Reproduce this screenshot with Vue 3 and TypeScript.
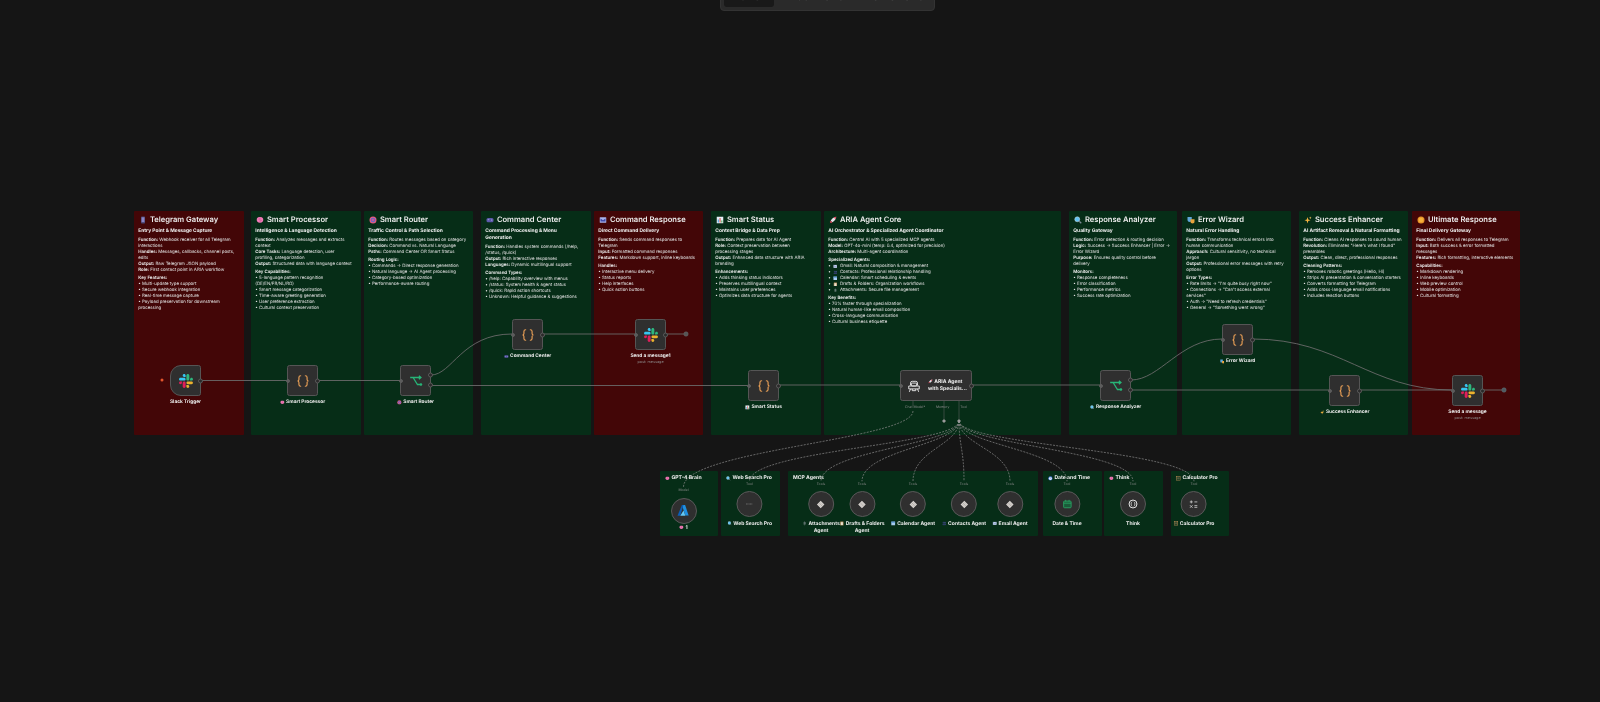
<script setup lang="ts">
type Line = string | [string, string];
interface Note {
  x: number; y: number; w: number; h: number;
  tone: 'red' | 'green' | 'mini';
  icon: string; title: string; sub?: string;
  blocks?: Line[][];
}
interface FlowNode {
  x: number; y: number; w?: number;
  icon: string; label: string; emoji?: string; sub?: string;
  trigger?: boolean; agent?: boolean;
  outs?: number[]; noIn?: boolean;
}
interface ToolNode {
  cx: number; cy: number; icon: string; port: string;
  label: string[]; emoji?: string; low?: boolean;
}

const notes: Note[] = [
  { x: 134, y: 211, w: 110, h: 224, tone: 'red', icon: 'phone', title: 'Telegram Gateway', sub: 'Entry Point & Message Capture', blocks: [
    ['Function: Webhook receiver for all Telegram interactions', 'Handles: Messages, callbacks, channel posts, edits', 'Output: Raw Telegram JSON payload', 'Role: First contact point in ARIA workflow'],
    ['Key Features:', '• Multi-update type support', '• Secure webhook integration', '• Real-time message capture', '• Payload preservation for downstream processing'],
  ] },
  { x: 251, y: 211, w: 110, h: 224, tone: 'green', icon: 'brain', title: 'Smart Processor', sub: 'Intelligence & Language Detection', blocks: [
    ['Function: Analyzes messages and extracts context', 'Core Tasks: Language detection, user\nprofiling, categorization', 'Output: Structured data with language context'],
    ['Key Capabilities:', '• 5-language pattern recognition (DE/EN/FR/NL/RO)', '• Smart message categorization', '• Time-aware greeting generation', '• User preference extraction', '• Cultural context preservation'],
  ] },
  { x: 364, y: 211, w: 109, h: 224, tone: 'green', icon: 'target', title: 'Smart Router', sub: 'Traffic Control & Path Selection', blocks: [
    ['Function: Routes messages based on category', 'Decision: Command vs. Natural Language', 'Paths: Command Center OR Smart Status'],
    ['Routing Logic:', '• Commands → Direct response generation', '• Natural language → AI Agent processing', '• Category-based optimization', '• Performance-aware routing'],
  ] },
  { x: 481, y: 211, w: 110, h: 224, tone: 'green', icon: 'game', title: 'Command Center', sub: 'Command Processing & Menu\nGeneration', blocks: [
    ['Function: Handles system commands (/help, /status, /quick)', 'Output: Rich interactive responses', 'Languages: Dynamic multilingual support'],
    ['Command Types:', '• /help: Capability overview with menus', '• /status: System health & agent status', '• /quick: Rapid action shortcuts', '• Unknown: Helpful guidance & suggestions'],
  ] },
  { x: 594, y: 211, w: 109, h: 224, tone: 'red', icon: 'mail', title: 'Command Response', sub: 'Direct Command Delivery', blocks: [
    ['Function: Sends command responses to Telegram', 'Input: Formatted command responses', 'Features: Markdown support, inline keyboards'],
    ['Handles:', '• Interactive menu delivery', '• Status reports', '• Help interfaces', '• Quick action buttons'],
  ] },
  { x: 711, y: 211, w: 110, h: 224, tone: 'green', icon: 'chart', title: 'Smart Status', sub: 'Context Bridge & Data Prep', blocks: [
    ['Function: Prepares data for AI Agent', 'Role: Context preservation between\nprocessing stages', 'Output: Enhanced data structure with ARIA branding'],
    ['Enhancements:', '• Adds thinking status indicators', '• Preserves multilingual context', '• Maintains user preferences', '• Optimizes data structure for agents'],
  ] },
  { x: 824, y: 211, w: 237, h: 224, tone: 'green', icon: 'rocket', title: 'ARIA Agent Core', sub: 'AI Orchestrator & Specialized Agent Coordinator', blocks: [
    ['Function: Central AI with 5 specialized MCP agents', 'Model: GPT-4o-mini (temp: 0.4, optimized for precision)', 'Architecture: Multi-agent coordination'],
    ['Specialized Agents:', ['envelope', 'Gmail: Natural composition & management'], ['people', 'Contacts: Professional relationship handling'], ['cal', 'Calendar: Smart scheduling & events'], ['clipboard', 'Drafts & Folders: Organization workflows'], ['clip', 'Attachments: Secure file management']],
    ['Key Benefits:', '• 70% faster through specialization', '• Natural human-like email composition', '• Cross-language communication', '• Cultural business etiquette'],
  ] },
  { x: 1069, y: 211, w: 108, h: 224, tone: 'green', icon: 'search', title: 'Response Analyzer', sub: 'Quality Gateway', blocks: [
    ['Function: Error detection & routing decision', 'Logic: Success → Success Enhancer | Error →\nError Wizard', 'Purpose: Ensures quality control before\ndelivery'],
    ['Monitors:', '• Response completeness', '• Error classification', '• Performance metrics', '• Success rate optimization'],
  ] },
  { x: 1182, y: 211, w: 109, h: 224, tone: 'green', icon: 'masks', title: 'Error Wizard', sub: 'Natural Error Handling', blocks: [
    ['Function: Transforms technical errors into human communication', 'Approach: Cultural sensitivity, no technical jargon', 'Output: Professional error messages with retry options'],
    ['Error Types:', '• Rate limits → "I\'m quite busy right now"', '• Connections → "Can\'t access external services"', '• Auth → "Need to refresh credentials"', '• General → "Something went wrong"'],
  ] },
  { x: 1299, y: 211, w: 109, h: 224, tone: 'green', icon: 'sparkle', title: 'Success Enhancer', sub: 'AI Artifact Removal & Natural Formatting', blocks: [
    ['Function: Cleans AI responses to sound human', 'Revolution: Eliminates "Here\'s what I found"\npreambles', 'Output: Clean, direct, professional responses'],
    ['Cleaning Patterns:', '• Removes robotic greetings (Hello, Hi)', '• Strips AI presentation & conversation starters', '• Converts formatting for Telegram', '• Adds cross-language email notifications', '• Includes reaction buttons'],
  ] },
  { x: 1412, y: 211, w: 108, h: 224, tone: 'red', icon: 'star', title: 'Ultimate Response', sub: 'Final Delivery Gateway', blocks: [
    ['Function: Delivers all responses to Telegram', 'Input: Both success & error formatted\nmessages', 'Features: Rich formatting, interactive elements'],
    ['Capabilities:', '• Markdown rendering', '• Inline keyboards', '• Web preview control', '• Mobile optimization', '• Cultural formatting'],
  ] },
  { x: 660, y: 471, w: 58, h: 65, tone: 'mini', icon: 'brain', title: 'GPT-4 Brain' },
  { x: 721, y: 471, w: 59, h: 65, tone: 'mini', icon: 'search', title: 'Web Search Pro' },
  { x: 788, y: 471, w: 250, h: 65, tone: 'mini', icon: '', title: 'MCP Agents' },
  { x: 1043, y: 471, w: 59, h: 65, tone: 'mini', icon: 'clock', title: 'Date and Time' },
  { x: 1104, y: 471, w: 59, h: 65, tone: 'mini', icon: 'brain', title: 'Think' },
  { x: 1171, y: 471, w: 58, h: 65, tone: 'mini', icon: 'abacus', title: 'Calculator Pro' },
];

const flowNodes: FlowNode[] = [
  { x: 170, y: 365, icon: 'slack', label: 'Slack Trigger', trigger: true, noIn: true, outs: [50] },
  { x: 287, y: 365, icon: 'code', label: 'Smart Processor', emoji: 'brain', outs: [50] },
  { x: 400, y: 365, icon: 'switch', label: 'Smart Router', emoji: 'target', outs: [32, 66] },
  { x: 512, y: 319, icon: 'code', label: 'Command Center', emoji: 'game', outs: [50] },
  { x: 635, y: 319, icon: 'slack', label: 'Send a message1', sub: 'post: message', outs: [50] },
  { x: 748, y: 370, icon: 'code', label: 'Smart Status', emoji: 'chart', outs: [50] },
  { x: 900, y: 370, w: 72, icon: 'robot', label: 'ARIA Agent with Specialis...', agent: true, outs: [50] },
  { x: 1100, y: 370, icon: 'switch', label: 'Response Analyzer', emoji: 'search', outs: [32, 66] },
  { x: 1222, y: 324, icon: 'code', label: 'Error Wizard', emoji: 'masks', outs: [50] },
  { x: 1329, y: 375, icon: 'code', label: 'Success Enhancer', emoji: 'sparkle', outs: [50] },
  { x: 1452, y: 375, icon: 'slack', label: 'Send a message', sub: 'post: message', outs: [50] },
];

const tools: ToolNode[] = [
  { cx: 683.5, cy: 510.7, icon: 'azure', port: 'Model', label: ['1'], emoji: 'brain', low: true },
  { cx: 749.5, cy: 504.3, icon: 'dash', port: 'Tool', label: ['Web Search Pro'], emoji: 'search' },
  { cx: 821, cy: 504.3, icon: 'mcp', port: 'Tools', label: ['Attachments', 'Agent'], emoji: 'clip' },
  { cx: 862, cy: 504.3, icon: 'mcp', port: 'Tools', label: ['Drafts & Folders', 'Agent'], emoji: 'clipboard' },
  { cx: 913, cy: 504.3, icon: 'mcp', port: 'Tools', label: ['Calendar Agent'], emoji: 'cal' },
  { cx: 964, cy: 504.3, icon: 'mcp', port: 'Tools', label: ['Contacts Agent'], emoji: 'people' },
  { cx: 1010, cy: 504.3, icon: 'mcp', port: 'Tools', label: ['Email Agent'], emoji: 'envelope' },
  { cx: 1067, cy: 504.3, icon: 'calendar', port: 'Tool', label: ['Date & Time'] },
  { cx: 1133, cy: 504.3, icon: 'think', port: 'Tool', label: ['Think'] },
  { cx: 1194, cy: 504.3, icon: 'calc', port: 'Tool', label: ['Calculator Pro'], emoji: 'abacus' },
];

const wires: string[] = [
  'M201 380.5H287',
  'M318 380.5H400',
  'M431 375C452 375 462 334 512 334',
  'M431 385.5H748',
  'M543 334H635',
  'M666 334H684',
  'M779 385H900',
  'M972 385H1100',
  'M1131 380C1160 380 1180 339 1222 339',
  'M1131 390H1329',
  'M1253 339C1340 339 1370 390 1452 390',
  'M1360 390H1452',
  'M1483 390H1502',
];

// dashed links from the agent's model and tool ports down to its sub nodes
const dashed: string[] = [
  'M913 411C913 440 683 450 683.5 ' + 487,
  ...tools.slice(1).map((t) => `M959 421C959 445 ${t.cx} 450 ${t.cx} ${t.cy - 23}`),
];

function split(line: string) {
  if (line.startsWith('•')) return { key: '', rest: line };
  const i = line.indexOf(':');
  return { key: line.slice(0, i + 1), rest: line.slice(i + 1) };
}
</script>

<template>
  <div class="canvas">
    <svg class="sprite" aria-hidden="true">
      <symbol id="e-phone" viewBox="0 0 16 16"><rect x="4" y="1" width="8" height="14" rx="1.5" fill="#4b4675" /><rect x="5.2" y="2.6" width="5.6" height="9.6" fill="#8b84c4" /></symbol>
      <symbol id="e-brain" viewBox="0 0 16 16"><path d="M8 2.500C5 1.500 1.500 3.500 1.500 7c-.6 3.500 2 6.500 6.500 6.500s7-3 6.500-6.500C14.500 3.500 11 1.500 8 2.500z" fill="#f27cb8" /><path d="M8 3v10M4.500 6c1 .8 2 .8 3 0M8.500 9c1 .8 2 .8 3 0" stroke="#c44c8c" stroke-width="1" fill="none" /></symbol>
      <symbol id="e-target" viewBox="0 0 16 16"><circle cx="8" cy="8" r="7" fill="#e35a80" /><circle cx="8" cy="8" r="4.600" fill="#6f64c8" /><circle cx="8" cy="8" r="2.200" fill="#e35a80" /></symbol>
      <symbol id="e-game" viewBox="0 0 16 16"><rect x="1" y="4" width="14" height="8.500" rx="3" fill="#5a58a8" /><rect x="3.500" y="7" width="3" height="1.200" fill="#c8c8f0" /><circle cx="11.500" cy="8" r="1.100" fill="#c8c8f0" /></symbol>
      <symbol id="e-mail" viewBox="0 0 16 16"><rect x="1.500" y="2.500" width="13" height="11" rx="1" fill="#a9b2ea" /><path d="M3 5l5 3.500L13 5v6H3z" fill="#3f4aa8" /></symbol>
      <symbol id="e-chart" viewBox="0 0 16 16"><rect x="1.500" y="1.500" width="13" height="13" fill="#e6edf5" /><rect x="3.500" y="7" width="2.200" height="6" fill="#4aa3df" /><rect x="7" y="4" width="2.200" height="9" fill="#d9534f" /><rect x="10.500" y="9" width="2.200" height="4" fill="#4caf50" /></symbol>
      <symbol id="e-rocket" viewBox="0 0 16 16"><path d="M14.500 1.500C9.500 2 5.500 5 3.500 9.500l3 3C11 10.500 14 6.500 14.500 1.500z" fill="#e8e4ea" /><path d="M14.500 1.500c-2 .2-3.500.8-5 1.600l3.400 3.400c.8-1.500 1.400-3 1.600-5z" fill="#e0455c" /><path d="M3.500 9.500l-2 1.500 1.500.5-1.500 3 3-1.500.5 1.500 1.500-2z" fill="#e0455c" /></symbol>
      <symbol id="e-search" viewBox="0 0 16 16"><circle cx="6.500" cy="6.500" r="5" fill="#62c4f4" stroke="#cfd8de" stroke-width="1" /><path d="M10.500 10.500l4 4" stroke="#7d8a96" stroke-width="2.500" /></symbol>
      <symbol id="e-masks" viewBox="0 0 16 16"><path d="M1 2h8.500v6c0 2.500-2 4-4.200 4S1 10.500 1 8z" fill="#5fa5d8" /><path d="M7 6.500h8v5c0 2-1.800 3.500-4 3.500s-4-1.500-4-3.500z" fill="#e8a33c" /></symbol>
      <symbol id="e-sparkle" viewBox="0 0 16 16"><path d="M7 2l1.500 5L13 8.500 8.500 10 7 15l-1.500-5L1 8.500 5.500 7z" fill="#f4b33f" /><path d="M12.500 1l.7 2 1.800.7-1.800.7-.7 2-.7-2-1.800-.7 1.800-.7z" fill="#f4c860" /></symbol>
      <symbol id="e-star" viewBox="0 0 16 16"><circle cx="8" cy="8" r="7" fill="#e8942a" /><circle cx="8" cy="8" r="4.500" fill="#f6b13c" /></symbol>
      <symbol id="e-clip" viewBox="0 0 16 16"><path d="M10 4v7a2 2 0 0 1-4 0V4a1.300 1.300 0 0 1 2.600 0v6" fill="none" stroke="#a7adb5" stroke-width="1.500" /></symbol>
      <symbol id="e-clipboard" viewBox="0 0 16 16"><rect x="2.500" y="2" width="11" height="13" rx="1" fill="#b88c58" /><rect x="4.500" y="4" width="7" height="9.500" fill="#e8e0d0" /></symbol>
      <symbol id="e-cal" viewBox="0 0 16 16"><rect x="1.500" y="2" width="13" height="12.500" fill="#a7cbee" /><rect x="1.500" y="2" width="13" height="3.500" fill="#4f8fd0" /></symbol>
      <symbol id="e-people" viewBox="0 0 16 16"><circle cx="5.500" cy="5.500" r="3" fill="#2f3c66" /><circle cx="10.500" cy="5.500" r="3" fill="#3b4a7a" /><rect x="2" y="9" width="12" height="5" rx="2" fill="#2f3c66" /></symbol>
      <symbol id="e-envelope" viewBox="0 0 16 16"><rect x="1.500" y="3" width="13" height="10" fill="#c6d4ee" /><path d="M1.500 3L8 9l6.500-6M1.500 13L6 7.500M14.500 13L10 7.500" stroke="#3c548e" fill="none" /></symbol>
      <symbol id="e-clock" viewBox="0 0 16 16"><circle cx="8" cy="8" r="7" fill="#3f78d8" /><circle cx="8" cy="8" r="5" fill="#e5eefc" /><path d="M8 4.500V8l2.500 1.500" stroke="#27457e" fill="none" /></symbol>
      <symbol id="e-abacus" viewBox="0 0 16 16"><rect x="2" y="1.500" width="12" height="13" fill="none" stroke="#c4935a" stroke-width="1.700" /><path d="M4 5.500h8M4 8h8M4 10.500h8" stroke="#c8a078" stroke-width="1.100" /></symbol>

      <symbol id="i-slack" viewBox="0 0 122.800 122.800">
        <path d="M25.800 77.600c0 7.100-5.800 12.900-12.900 12.900S0 84.700 0 77.600s5.800-12.900 12.900-12.900h12.900v12.900zm6.500 0c0-7.100 5.800-12.900 12.900-12.900s12.900 5.800 12.900 12.900v32.300c0 7.100-5.800 12.900-12.900 12.900s-12.900-5.800-12.900-12.900V77.600z" fill="#e01e5a" />
        <path d="M45.200 25.800c-7.100 0-12.900-5.800-12.900-12.900S38.100 0 45.200 0s12.900 5.800 12.900 12.900v12.900H45.200zm0 6.500c7.100 0 12.900 5.800 12.900 12.900s-5.800 12.900-12.900 12.900H12.900C5.800 58.100 0 52.300 0 45.200s5.800-12.900 12.900-12.900h32.300z" fill="#36c5f0" />
        <path d="M97 45.200c0-7.100 5.800-12.900 12.900-12.900s12.900 5.800 12.900 12.900-5.800 12.900-12.900 12.900H97V45.200zm-6.500 0c0 7.100-5.800 12.900-12.900 12.900s-12.900-5.800-12.900-12.900V12.900C64.700 5.800 70.500 0 77.600 0s12.900 5.800 12.900 12.900v32.300z" fill="#2eb67d" />
        <path d="M77.600 97c7.100 0 12.900 5.800 12.900 12.900s-5.800 12.900-12.900 12.900-12.900-5.800-12.900-12.900V97h12.900zm0-6.500c-7.100 0-12.900-5.800-12.900-12.900s5.800-12.900 12.900-12.900h32.300c7.100 0 12.900 5.800 12.900 12.900s-5.800 12.900-12.900 12.900H77.600z" fill="#ecb22e" />
      </symbol>
      <symbol id="i-code" viewBox="0 0 24 24">
        <path d="M8 3C5.500 3 5 4.500 5 6v3.500C5 11 4 12 2.500 12 4 12 5 13 5 14.500V18c0 1.500.5 3 3 3M16 3c2.500 0 3 1.500 3 3v3.500c0 1.500 1 2.500 2.500 2.500-1.500 0-2.500 1-2.500 2.500V18c0 1.500-.5 3-3 3" fill="none" stroke="#e89f56" stroke-width="2" stroke-linecap="round" />
      </symbol>
      <symbol id="i-switch" viewBox="0 0 24 24">
        <path d="M2 6h18M7 6l7.500 12H20M17 3l3.500 3L17 9" fill="none" stroke="#27b577" stroke-width="2.200" />
        <circle cx="20.500" cy="18" r="2.200" fill="#27b577" />
      </symbol>
      <symbol id="i-robot" viewBox="0 0 24 24">
        <g fill="none" stroke="#e8e8e8" stroke-width="1.600">
          <path d="M6 11V7a3 3 0 0 1 3-3h6a3 3 0 0 1 3 3v4" />
          <rect x="7.500" y="7" width="9" height="5" rx="1.500" />
          <path d="M3 12h18v5H3zM6 17l-2 5M18 17l2 5M9 17v3h6v-3" />
        </g>
      </symbol>
      <symbol id="i-azure" viewBox="0 0 24 24">
        <path d="M9 2h6l6.500 19h-6z" fill="#1f8fe0" />
        <path d="M9 2h3L6 21.500H1z" fill="#0b5fb8" />
        <path d="M12 12l3.500 9.500H6z" fill="#62c8f5" />
      </symbol>
      <symbol id="i-dash" viewBox="0 0 24 24"><path d="M4 12h16" stroke="#8c8c8c" stroke-width="1.800" /></symbol>
      <symbol id="i-mcp" viewBox="0 0 24 24">
        <path d="M12 2l10 10-10 10L2 12z" fill="#d8d4d0" />
        <path d="M7 12l5-5M12 17l5-5M9.500 14.500l5-5" stroke="#7c7872" stroke-width="1.200" />
      </symbol>
      <symbol id="i-calendar" viewBox="0 0 24 24">
        <rect x="3" y="5" width="18" height="16" rx="2" fill="#1a5c3a" stroke="#2aa866" stroke-width="2" />
        <path d="M3 10h18M8 2v4M16 2v4" stroke="#2aa866" stroke-width="2" />
      </symbol>
      <symbol id="i-think" viewBox="0 0 24 24">
        <circle cx="12" cy="12" r="9.500" fill="none" stroke="#e6e6e6" stroke-width="2.400" />
        <path d="M10 6.500c-3.500 2-3.500 9 0 11M14 6.500c3.500 2 3.500 9 0 11" fill="none" stroke="#e6e6e6" stroke-width="1.800" />
      </symbol>
      <symbol id="i-calc" viewBox="0 0 24 24">
        <path d="M3 7h7M6.500 3.500v7M14 7h7M3.500 15l6 6M9.500 15l-6 6M14 16h7M14 20h7" stroke="#cfcfcf" stroke-width="2" fill="none" />
      </symbol>
    </svg>

    <section
      v-for="note in notes"
      :key="note.title"
      class="note"
      :class="note.tone"
      :style="{ left: note.x + 'px', top: note.y + 'px', width: note.w + 'px', height: note.h + 'px' }"
    >
      <h2 v-if="note.tone !== 'mini'">
        <svg class="emo big"><use :href="'#e-' + note.icon" /></svg>{{ note.title }}
      </h2>
      <h3 v-if="note.sub">{{ note.sub }}</h3>
      <h3 v-if="note.tone === 'mini'" class="mini-title">
        <svg v-if="note.icon" class="emo"><use :href="'#e-' + note.icon" /></svg>{{ note.title }}
      </h3>
      <p v-for="(block, b) in note.blocks" :key="b">
        <span v-for="(line, l) in block" :key="l" class="line">
          <template v-if="typeof line === 'string'">
            <strong>{{ split(line).key }}</strong>{{ split(line).rest }}
          </template>
          <template v-else>
            •<svg class="emo tiny"><use :href="'#e-' + line[0]" /></svg>{{ line[1] }}
          </template>
        </span>
      </p>
    </section>

    <svg class="edges" viewBox="0 0 1600 702" aria-hidden="true">
      <path v-for="(d, i) in wires" :key="i" :d="d" class="wire" />
      <path v-for="(d, i) in dashed" :key="'d' + i" :d="d" class="dash" />
      <path d="M944 401V419M959 401V419M913 401V406" class="wire thin" />
      <path d="M942 421l2-2 2 2-2 2zM957 421l2-2 2 2-2 2z" class="port" />
      <circle cx="162" cy="380" r="1.500" fill="#e4552c" />
      <circle cx="686" cy="334" r="2.200" fill="#555" stroke="#6b6b6b" stroke-width=".5" />
      <circle cx="1504" cy="390" r="2.200" fill="#4c5a60" stroke="#66747a" stroke-width=".5" />
    </svg>

    <div
      v-for="node in flowNodes"
      :key="node.label"
      class="flow-node"
      :style="{ left: node.x + 'px', top: node.y + 'px', width: (node.w ?? 31) + 'px' }"
    >
      <div class="box" :class="{ trigger: node.trigger, agent: node.agent }">
        <i v-if="!node.noIn" class="handle in"></i>
        <i v-for="o in node.outs" :key="o" class="handle out" :style="{ top: o + '%' }"></i>
        <svg class="node-icon"><use :href="'#i-' + node.icon" /></svg>
        <div v-if="node.agent" class="agent-name">
          <div><svg class="emo"><use href="#e-rocket" /></svg>ARIA Agent</div>
          <div>with Specialis...</div>
        </div>
      </div>
      <template v-if="!node.agent">
        <div class="label">
          <svg v-if="node.emoji" class="emo"><use :href="'#e-' + node.emoji" /></svg>{{ node.label }}
        </div>
        <div v-if="node.sub" class="sub">{{ node.sub }}</div>
      </template>
    </div>

    <div class="agent-ports">
      <span>Chat Model*</span><span>Memory</span><span>Tool</span>
    </div>

    <div
      v-for="tool in tools"
      :key="tool.label.join()"
      class="tool"
      :style="{ left: tool.cx + 'px', top: tool.cy - 22.500 + 'px' }"
    >
      <span class="port-name">{{ tool.port }}</span>
      <div class="circle"><svg class="tool-icon" :class="tool.icon"><use :href="'#i-' + tool.icon" /></svg></div>
      <div class="tool-label" :class="{ low: tool.low }">
        <div v-for="(text, i) in tool.label" :key="i">
          <svg v-if="i === 0 && tool.emoji" class="emo"><use :href="'#e-' + tool.emoji" /></svg>{{ text }}
        </div>
      </div>
    </div>

    <nav class="tabs">
      <span class="tab active">Editor</span>
      <span class="tab">Executions</span>
      <span class="tab">Evaluations</span>
    </nav>
  </div>
</template>

<style scoped>
.canvas {
  position: relative;
  width: 1600px;
  height: 702px;
  overflow: hidden;
  background: #151515;
  color: #e4e4e4;
  font-family: Inter, 'Liberation Sans', sans-serif;
  text-rendering: geometricPrecision;
  filter: blur(0.42px);
}

.sprite {
  position: absolute;
  width: 0;
  height: 0;
}

.note {
  position: absolute;
  box-sizing: border-box;
  padding: 4px 5px 3px 4.300px;
  border-radius: 1px;
  font-size: 4.400px;
  line-height: 6px;
}
.note.red {
  background: #430607;
}
.note.green,
.note.mini {
  background: #062d17;
}

h2 {
  display: flex;
  align-items: center;
  margin: 0 0 2.300px;
  font-size: 7.600px;
  line-height: 10.500px;
  font-weight: 600;
  color: #ececec;
}
h3 {
  margin: 0 0 2.600px;
  font-size: 4.900px;
  line-height: 7.200px;
  font-weight: 700;
  color: #f0f0f0;
  white-space: pre-line;
}
.mini-title {
  display: flex;
  align-items: center;
  margin-left: 0.800px;
  font-size: 5.100px;
}
p {
  margin: 0 0 2.300px;
  color: #e0e0e0;
}
.line {
  display: block;
  white-space: pre-line;
}
strong {
  font-weight: 600;
  color: #f2f2f2;
}

.emo {
  width: 4.800px;
  height: 4.800px;
  margin-right: 1.500px;
  vertical-align: -0.600px;
  flex: none;
}
.emo.big {
  width: 8px;
  height: 8px;
  margin-right: 3px;
  margin-left: 0.600px;
}
.emo.tiny {
  margin: -1px 2.500px -1px 1.800px;
}

.edges {
  position: absolute;
  inset: 0;
  width: 1600px;
  height: 702px;
}
.wire {
  fill: none;
  stroke: #6a6a6a;
  stroke-width: 0.900;
}
.wire.thin {
  stroke-width: 0.500;
}
.dash {
  fill: none;
  stroke: #8a8a8a;
  stroke-width: 0.700;
  stroke-dasharray: 2 1.200;
}
.port {
  fill: #9a9a9a;
}

.flow-node {
  position: absolute;
  display: flex;
  flex-direction: column;
  align-items: center;
}
.box {
  position: relative;
  box-sizing: border-box;
  display: flex;
  align-items: center;
  justify-content: center;
  width: 100%;
  height: 31px;
  background: #2f2f2f;
  border: 0.600px solid #555;
  border-radius: 2.500px;
}
.box.trigger {
  border-radius: 11px 2.500px 2.500px 11px;
}
.box.agent {
  justify-content: flex-start;
  padding-left: 6px;
  gap: 7px;
}
.node-icon {
  width: 14px;
  height: 14px;
  flex: none;
}
.agent-name {
  font-size: 5px;
  line-height: 6.400px;
  font-weight: 700;
  white-space: nowrap;
  color: #eee;
}
.handle {
  position: absolute;
  width: 5px;
  height: 5px;
  box-sizing: border-box;
  border: 0.600px solid #5a5a5a;
  border-radius: 50%;
  background: #2a2a2a;
  transform: translateY(-50%);
}
.handle.in {
  left: -2.500px;
  top: 50%;
  width: 4px;
  height: 4px;
  background: #5c5c5c;
  border-color: #5c5c5c;
}
.handle.out {
  right: -2.800px;
}
.label {
  display: flex;
  align-items: center;
  margin-top: 3.200px;
  font-size: 4.800px;
  line-height: 6px;
  font-weight: 700;
  white-space: nowrap;
  color: #eaeaea;
}
.sub {
  font-size: 3.800px;
  line-height: 5px;
  white-space: nowrap;
  color: #8f8f8f;
}

.agent-ports {
  position: absolute;
  left: 905px;
  top: 405px;
  width: 62px;
  display: flex;
  justify-content: space-between;
  font-size: 3.400px;
  line-height: 4px;
  color: #8b8b8b;
}

.tool {
  position: absolute;
  display: flex;
  flex-direction: column;
  align-items: center;
  transform: translateX(-50%);
}
.port-name {
  height: 4px;
  font-size: 3.400px;
  line-height: 4px;
  color: #8b8b8b;
  margin-bottom: 5.500px;
}
.circle {
  box-sizing: border-box;
  display: flex;
  align-items: center;
  justify-content: center;
  width: 26px;
  height: 26px;
  border-radius: 50%;
  background: #2f2f2f;
  border: 0.700px solid #595959;
}
.tool-icon {
  width: 10px;
  height: 10px;
}
.tool-icon.azure {
  width: 13px;
  height: 13px;
}
.tool-icon.mcp {
  width: 9px;
  height: 9px;
}
.tool-label {
  margin-top: 4px;
  font-size: 5px;
  line-height: 6.400px;
  font-weight: 700;
  white-space: nowrap;
  text-align: center;
  color: #eaeaea;
}
.tool-label.low {
  margin-top: 1.500px;
}

.tabs {
  position: absolute;
  left: 720px;
  top: -10px;
  box-sizing: border-box;
  display: flex;
  align-items: flex-end;
  width: 215px;
  height: 21px;
  padding: 0 3px 3px;
  background: #2a2a2a;
  border: 1px solid #333;
  border-radius: 4px;
  font-size: 12px;
  line-height: 12px;
  color: #6a6a6a;
}
.tab {
  flex: 1;
  height: 100%;
  display: flex;
  align-items: flex-end;
  justify-content: center;
  padding-bottom: 5px;
  box-sizing: border-box;
  overflow: hidden;
}
.tab.active {
  flex: none;
  width: 50px;
  background: #191919;
  border-radius: 3px;
  color: #5c5c5c;
}
</style>

<style>
html,
body {
  margin: 0;
  background: #151515;
}
</style>
